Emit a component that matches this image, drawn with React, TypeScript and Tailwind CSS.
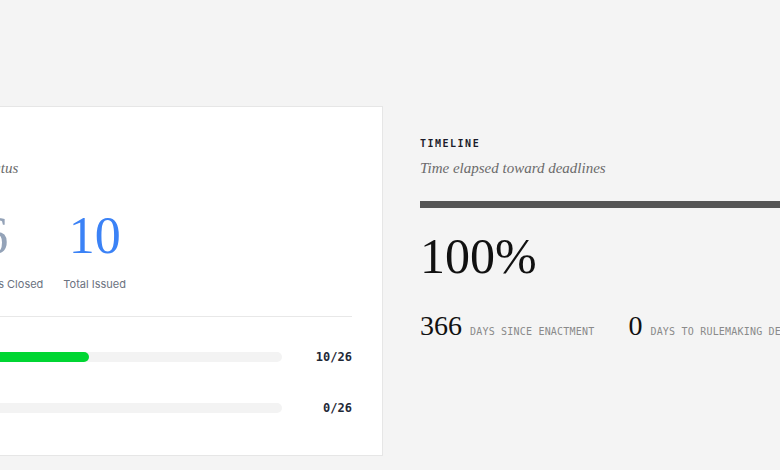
import React from 'react'

type Stat = { value: number; label: string; color: string }
type Progress = { label: string; done: number; total: number; dot: string }

const stats: Stat[] = [
    { value: 6, label: 'Responses Closed', color: 'text-[#94a3b8]' },
    { value: 10, label: 'Total Issued', color: 'text-[#3b82f6]' },
]

const progress: Progress[] = [
    { label: 'Closed', done: 10, total: 26, dot: 'bg-[#00d632]' },
    { label: 'Rulemaking', done: 0, total: 26, dot: 'bg-[#d4d4d4]' },
]

const serif = "font-['Liberation_Serif',serif]"
const mono = "font-['DejaVu_Sans_Mono',monospace]"

function StatusCard() {
    return (
        <div className="w-[469px] shrink-0 bg-white border border-[#e6e6e6] pl-8 pr-[30px] pt-8 pb-8">
            <p className={`${mono} text-[10px] leading-[10px] font-bold tracking-[0.15em] text-[#1c1c2b]`}>STATUS</p>
            <p className={`${serif} italic text-[15px] leading-[22px] text-[#6b6b6b] mt-2`}>Issue Status</p>

            <div className="flex gap-5 mt-[31px] pb-6 border-b border-[#e8e8e8]">
                {stats.map((s) => (
                    <div key={s.label} className="flex flex-col items-center">
                        <span className={`${serif} text-[52px] leading-none ${s.color}`}>{s.value}</span>
                        <span className="font-['Inter',sans-serif] text-[11px] leading-4 text-[#6b7280] mt-3.5">{s.label}</span>
                    </div>
                ))}
            </div>

            <div className="flex flex-col gap-[35px] pt-8 pb-[7px]">
                {progress.map((p) => (
                    <div key={p.label} className="flex items-center" title={p.label}>
                        <span className={`w-[9px] h-[9px] rounded-full mr-3 ${p.dot}`}></span>
                        <div className="flex-1 h-2.5 rounded-full bg-[#f3f3f3] overflow-hidden">
                            <div className="h-full rounded-full bg-[#00d632]" style={{ width: `${(p.done / p.total) * 100}%` }}></div>
                        </div>
                        <span className={`${mono} w-[70px] text-right text-xs leading-4 font-bold text-[#1f2937]`}>
                            {p.done}/{p.total}
                        </span>
                    </div>
                ))}
            </div>
        </div>
    )
}

function Timeline() {
    return (
        <div className="w-[469px] shrink-0 pt-[33px]">
            <p className={`${mono} text-[10px] leading-[10px] font-bold tracking-[0.15em] text-[#1c1c2b]`}>TIMELINE</p>
            <p className={`${serif} italic text-[15px] leading-[22px] text-[#6b6b6b] mt-2`}>Time elapsed toward deadlines</p>

            <div className="h-[7px] bg-[#555555] mt-[22px]"></div>

            <p className={`${serif} text-[50px] leading-none text-[#111111] mt-[23px]`}>100%</p>

            <div className="flex items-baseline gap-[34px] mt-[31px]">
                <div className="flex items-baseline gap-2">
                    <span className={`${serif} text-[28px] leading-none text-[#111111]`}>366</span>
                    <span className={`${mono} text-[10px] tracking-[0.02em] text-[#8a8a8a]`}>DAYS SINCE ENACTMENT</span>
                </div>
                <div className="flex items-baseline gap-2">
                    <span className={`${serif} text-[28px] leading-none text-[#111111]`}>0</span>
                    <span className={`${mono} text-[10px] tracking-[0.02em] text-[#8a8a8a] whitespace-nowrap`}>DAYS TO RULEMAKING DEADLINE</span>
                </div>
            </div>
        </div>
    )
}

export default function App() {
    return (
        <div className="w-full min-h-screen bg-[#f4f4f4] overflow-hidden">
            <div className="flex gap-[37px] pt-[106px] -ml-[86px]">
                <StatusCard />
                <Timeline />
            </div>
        </div>
    )
}
